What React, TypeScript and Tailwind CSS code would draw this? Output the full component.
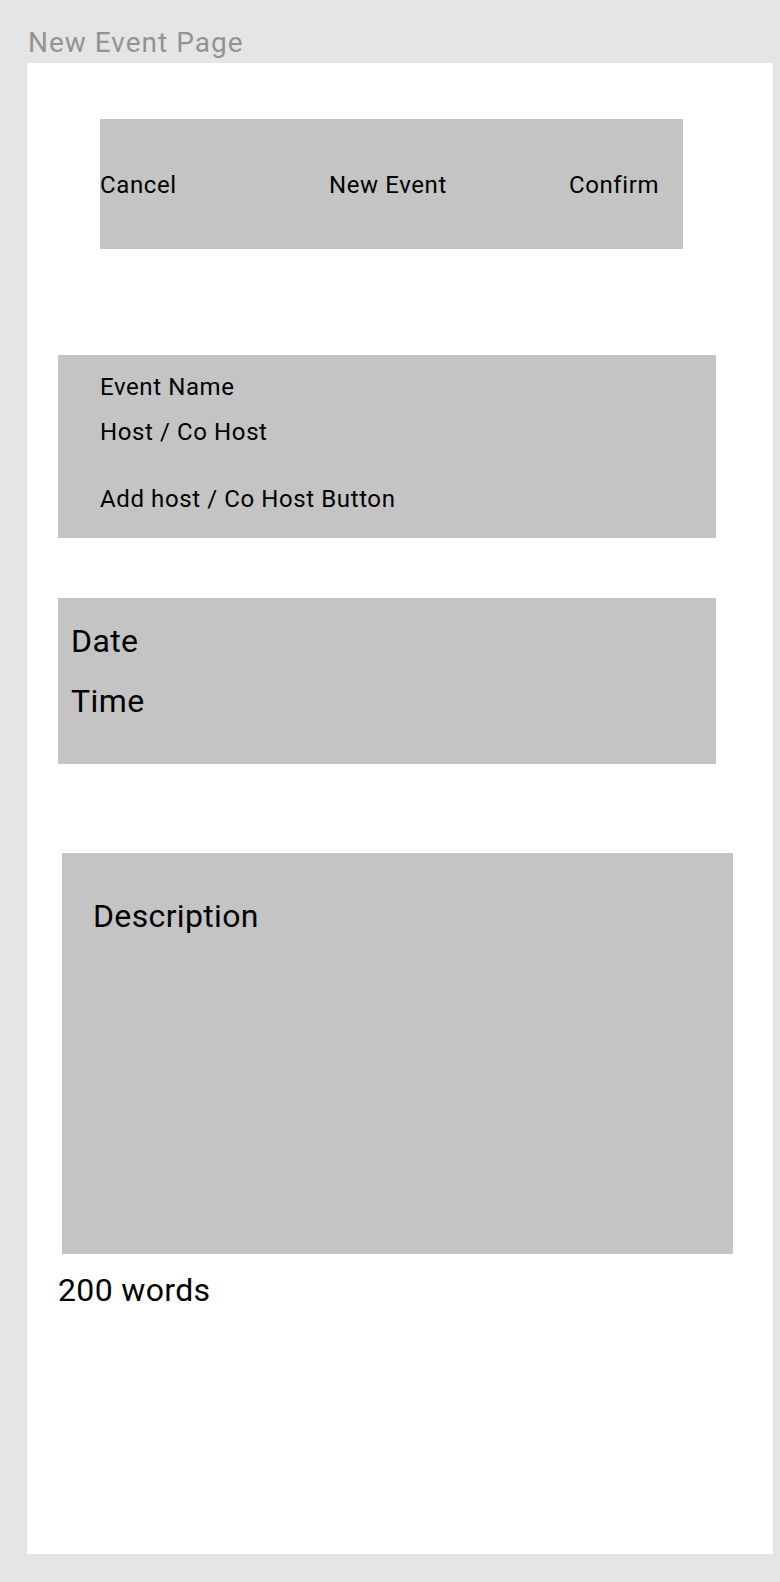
export default function App() {
  return (
    <div className="w-[780px] h-[1582px] bg-[#e5e5e5] pl-[27px] pt-[29px] font-['Roboto',sans-serif] text-black">
      <div className="text-[28px] leading-none tracking-[1px] text-[#939393] mb-[6px] ml-[1px]">New Event Page</div>

      <div className="w-[746px] h-[1491px] bg-white flex flex-col items-start">
        {/* top bar */}
        <div className="ml-[73px] mt-[56px] w-[583px] h-[130px] bg-[#c4c4c4] pt-[2px] grid grid-cols-[229px_240px_1fr] items-center text-[24px] leading-none tracking-[0.6px]">
          <div>Cancel</div>
          <div>New Event</div>
          <div>Confirm</div>
        </div>

        {/* name + hosts */}
        <div className="ml-[31px] mt-[106px] w-[658px] h-[183px] bg-[#c4c4c4] pl-[42px] pt-[20px] flex flex-col text-[24px] leading-none tracking-[0.6px]">
          <div>Event Name</div>
          <div className="mt-[21px]">Host / Co Host</div>
          <div className="mt-[43px]">Add host / Co Host Button</div>
        </div>

        {/* date + time */}
        <div className="ml-[31px] mt-[60px] w-[658px] h-[166px] bg-[#c4c4c4] pl-[13px] pt-[27px] flex flex-col text-[32px] leading-none tracking-[0.4px]">
          <div>Date</div>
          <div className="mt-[28px]">Time</div>
        </div>

        {/* description */}
        <div className="ml-[35px] mt-[89px] w-[671px] h-[401px] bg-[#c4c4c4] pl-[31px] pt-[47px] text-[32px] leading-none tracking-[0.35px]">
          Description
        </div>

        <div className="ml-[31px] mt-[20px] text-[32px] leading-none tracking-[0.35px]">200 words</div>
      </div>
    </div>
  );
}
